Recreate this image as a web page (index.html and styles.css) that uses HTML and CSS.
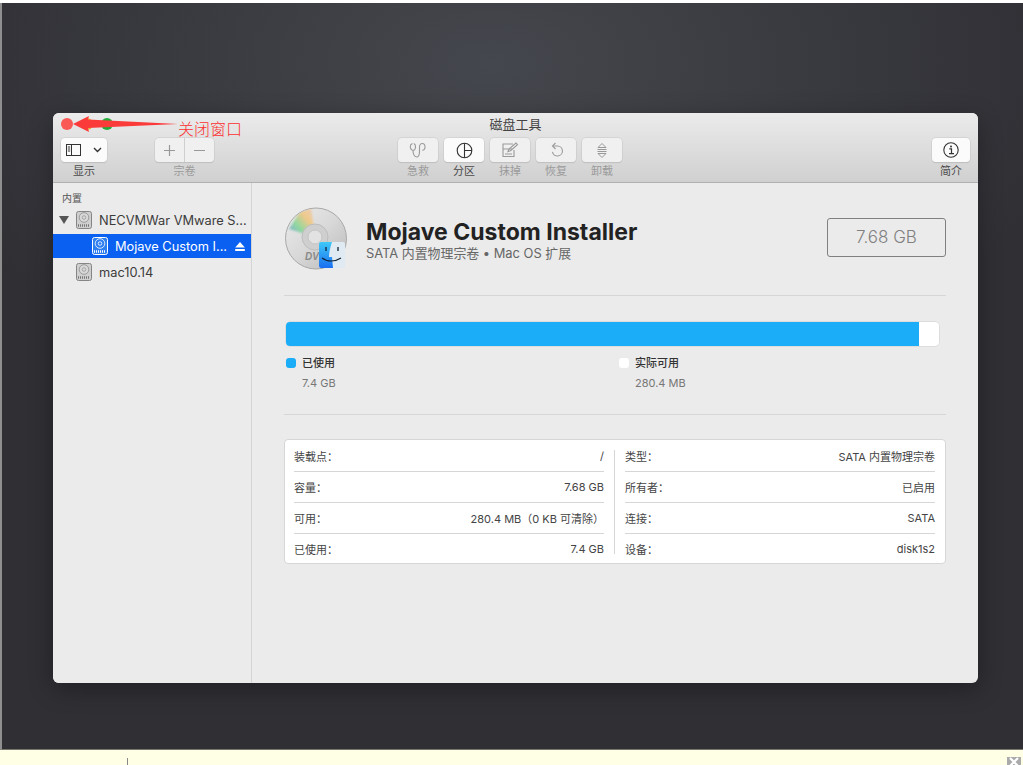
FILE: index.html
```html
<!DOCTYPE html>
<html lang="zh-CN">
<head>
    <meta charset="UTF-8">
    <meta name="viewport" content="width=device-width, initial-scale=1.0">
    <title>磁盘工具</title>
    <link rel="stylesheet" href="styles.css">
</head>
<body>
    <div class="desktop">
        <div class="window">
            <!-- 工具栏 -->
            <header class="titlebar">
                <div class="lights">
                    <span class="light red"></span>
                    <span class="light yellow"></span>
                    <span class="light green"></span>
                </div>
                <div class="window-title">磁盘工具</div>
                <div class="toolbar">
                    <div class="tool tool-view">
                        <div class="btn btn-view">
                            <svg width="15" height="12" viewBox="0 0 15 12"><rect x="0.5" y="0.5" width="14" height="11" fill="none" stroke="#333"/><path d="M5.5 0.5v11M1.8 3h2.4M1.8 5h2.4M1.8 7h2.4" fill="none" stroke="#333"/></svg>
                            <svg width="9" height="6" viewBox="0 0 9 6"><path d="M1 1l3.5 3.5L8 1" fill="none" stroke="#333" stroke-width="1.4"/></svg>
                        </div>
                        <span class="tool-label">显示</span>
                    </div>
                    <div class="tool tool-volume off">
                        <div class="btn btn-volume">
                            <span class="seg"><svg width="13" height="13" viewBox="0 0 13 13"><path d="M6.5 1v11M1 6.5h11" stroke="#999" stroke-width="1.2"/></svg></span>
                            <span class="seg seg-last"><svg width="13" height="13" viewBox="0 0 13 13"><path d="M1 6.5h11" stroke="#999" stroke-width="1.2"/></svg></span>
                        </div>
                        <span class="tool-label">宗卷</span>
                    </div>
                    <div class="tool-group">
                        <div class="tool off">
                            <div class="btn btn-action">
                                <svg width="18" height="17" viewBox="0 0 18 17"><path d="M3.5 1.5C2 2 1 4 1.5 6c.4 1.4 1.5 2.5 2.500 2.500S6.100 7.400 6.400 6C6.700 4 6 2 4.800 1.500M4 8.500c0 3 1.200 6.500 3.500 6.500 2.400 0 3-2.500 3-5.500V5c0-2 1.100-3.500 2.700-3.500 1.600 0 2.800 1.400 2.800 3.300 0 1.900-1.200 3.500-2.700 3.500" fill="none" stroke="#999" stroke-width="1.1"/></svg>
                            </div>
                            <span class="tool-label">急救</span>
                        </div>
                        <div class="tool">
                            <div class="btn btn-action">
                                <svg width="17" height="17" viewBox="0 0 17 17"><circle cx="8.5" cy="8.5" r="7.3" fill="none" stroke="#333" stroke-width="1.1"/><path d="M8.5 1.2v14.600M8.500 8.500h7.300" fill="none" stroke="#333" stroke-width="1.1"/></svg>
                            </div>
                            <span class="tool-label">分区</span>
                        </div>
                        <div class="tool off">
                            <div class="btn btn-action">
                                <svg width="18" height="16" viewBox="0 0 18 16"><path d="M12 2H2v5h9M2 7v7.500h11V8M4 12h7" fill="none" stroke="#999" stroke-width="1.1"/><path d="M7 9.500l1-2.500 7-6 1.500 1.700-7 6z" fill="none" stroke="#999" stroke-width="1.1"/></svg>
                            </div>
                            <span class="tool-label">抹掉</span>
                        </div>
                        <div class="tool off">
                            <div class="btn btn-action">
                                <svg width="14" height="16" viewBox="0 0 14 16"><path d="M4 4h4.500a5 5 0 1 1-5 5.800" fill="none" stroke="#999" stroke-width="1.1"/><path d="M6.500 1L3.500 4l3 3" fill="none" stroke="#999" stroke-width="1.1"/></svg>
                            </div>
                            <span class="tool-label">恢复</span>
                        </div>
                        <div class="tool off">
                            <div class="btn btn-action">
                                <svg width="12" height="17" viewBox="0 0 12 17"><path d="M2 5.500L6 1.500l4 4zM2 11.500l4 4 4-4zM1.500 7.500h9M1.500 9.500h9" fill="none" stroke="#999" stroke-width="1"/></svg>
                            </div>
                            <span class="tool-label">卸载</span>
                        </div>
                    </div>
                    <div class="tool tool-info">
                        <div class="btn btn-info">
                            <svg width="16" height="16" viewBox="0 0 16 16"><circle cx="8" cy="8" r="7.2" fill="none" stroke="#333" stroke-width="1.1"/><circle cx="8" cy="4.500" r="1" fill="#333"/><path d="M6.300 6.900H8.500V11.500M6 11.700h5" fill="none" stroke="#333" stroke-width="1.2"/></svg>
                        </div>
                        <span class="tool-label">简介</span>
                    </div>
                </div>
            </header>

            <div class="window-body">
                <!-- 边栏 -->
                <aside class="sidebar">
                    <div class="side-head">内置</div>
                    <div class="side-row">
                        <span class="triangle"></span>
                        <svg class="disk" width="16" height="18" viewBox="0 0 16 18"><rect x="0.5" y="0.5" width="15" height="17" rx="2" fill="#cfcfcf" stroke="#858585"/><circle cx="8" cy="6.500" r="4.800" fill="#d8d8d8" stroke="#8c8c8c" stroke-width="0.8"/><circle cx="8" cy="6.500" r="1.800" fill="none" stroke="#999" stroke-width="0.8"/><path d="M2 14.500h12" stroke="#777" stroke-width="2.500" stroke-dasharray="1 1"/></svg>
                        <span class="side-name">NECVMWar VMware S...</span>
                    </div>
                    <div class="side-row side-sub selected">
                        <svg class="disk" width="16" height="18" viewBox="0 0 16 18"><rect x="0.5" y="0.5" width="15" height="17" rx="2" fill="#2f7ff0" stroke="#fff"/><circle cx="8" cy="6.500" r="4.800" fill="none" stroke="#fff" stroke-width="0.8"/><circle cx="8" cy="6.500" r="1.800" fill="none" stroke="#fff" stroke-width="0.8"/><path d="M2 14.500h12" stroke="#fff" stroke-width="2.500" stroke-dasharray="1 1"/></svg>
                        <span class="side-name">Mojave Custom I...</span>
                        <svg class="eject" width="10" height="9" viewBox="0 0 10 9"><path d="M5 0l4.800 5.500H.2z" fill="#fff"/><rect x="0.2" y="7" width="9.6" height="2" fill="#fff"/></svg>
                    </div>
                    <div class="side-row">
                        <svg class="disk" width="16" height="18" viewBox="0 0 16 18"><rect x="0.5" y="0.5" width="15" height="17" rx="2" fill="#cfcfcf" stroke="#858585"/><circle cx="8" cy="6.500" r="4.800" fill="#d8d8d8" stroke="#8c8c8c" stroke-width="0.8"/><circle cx="8" cy="6.500" r="1.800" fill="none" stroke="#999" stroke-width="0.8"/><path d="M2 14.500h12" stroke="#777" stroke-width="2.500" stroke-dasharray="1 1"/></svg>
                        <span class="side-name">mac10.14</span>
                    </div>
                </aside>

                <!-- 主内容 -->
                <main class="content">
                    <section class="vol-head">
                        <svg class="vol-icon" width="64" height="64" viewBox="0 0 64 64">
                            <defs>
                                <linearGradient id="discBase" x1="0" y1="0" x2="1" y2="1">
                                    <stop offset="0" stop-color="#ececec"/>
                                    <stop offset="0.5" stop-color="#d8d8d8"/>
                                    <stop offset="1" stop-color="#b8b8b8"/>
                                </linearGradient>
                                <linearGradient id="discRainbow" x1="0" y1="1" x2="1" y2="0">
                                    <stop offset="0" stop-color="#7f9fe0"/>
                                    <stop offset="0.35" stop-color="#8fd8a0"/>
                                    <stop offset="0.65" stop-color="#f0c98a"/>
                                    <stop offset="1" stop-color="#e6cfc4"/>
                                </linearGradient>
                                <linearGradient id="finderBlue" x1="0" y1="0" x2="0" y2="1">
                                    <stop offset="0" stop-color="#3fc8f8"/>
                                    <stop offset="1" stop-color="#1a6ff0"/>
                                </linearGradient>
                                <filter id="soft"><feGaussianBlur stdDeviation="1.2"/></filter>
                                <clipPath id="discClip"><circle cx="32" cy="31.500" r="30"/></clipPath>
                            </defs>
                            <circle cx="32" cy="31.500" r="30.500" fill="url(#discBase)" stroke="#a8a8a8"/>
                            <g clip-path="url(#discClip)">
                                <path d="M31 30L5 22 15 6 27 0z" fill="url(#discRainbow)" filter="url(#soft)"/>
                            </g>
                            <circle cx="31" cy="30" r="13" fill="#cfcfcf" stroke="#bdbdbd"/>
                            <circle cx="31" cy="30" r="7" fill="#e2e2e2" stroke="#c4c4c4"/>
                            <text x="21" y="53" class="dvd-mark">DVD</text>
                            <rect x="35" y="35" width="26" height="26" rx="2" fill="#dfeaf3"/>
                            <path d="M37 35h11c-2 6-3 11-3 15h3l1 11H37a2 2 0 0 1-2-2V37a2 2 0 0 1 2-2z" fill="url(#finderBlue)"/>
                            <path d="M42 40v4M54 40v4" stroke="#123" stroke-width="1.3"/>
                            <path d="M38 51c5 4 13 4 19 0" fill="none" stroke="#123" stroke-width="1.1"/>
                        </svg>
                        <div class="vol-text">
                            <h1 class="vol-name">Mojave Custom Installer</h1>
                            <div class="vol-desc">SATA 内置物理宗卷 • Mac OS 扩展</div>
                        </div>
                        <div class="vol-size">7.68 GB</div>
                    </section>

                    <section class="usage">
                        <div class="bar"><div class="bar-used" style="width: 96.9%"></div></div>
                        <div class="legend">
                            <div class="legend-item">
                                <div class="legend-title"><span class="dot dot-used"></span>已使用</div>
                                <div class="legend-value">7.4 GB</div>
                            </div>
                            <div class="legend-item">
                                <div class="legend-title"><span class="dot dot-free"></span>实际可用</div>
                                <div class="legend-value">280.4 MB</div>
                            </div>
                        </div>
                    </section>

                    <section class="info">
                        <div class="info-col">
                            <div class="info-row"><span>装载点：</span><span>/</span></div>
                            <div class="info-row"><span>容量：</span><span>7.68 GB</span></div>
                            <div class="info-row"><span>可用：</span><span>280.4 MB（0 KB 可清除）</span></div>
                            <div class="info-row"><span>已使用：</span><span>7.4 GB</span></div>
                        </div>
                        <div class="info-col">
                            <div class="info-row"><span>类型：</span><span>SATA 内置物理宗卷</span></div>
                            <div class="info-row"><span>所有者：</span><span>已启用</span></div>
                            <div class="info-row"><span>连接：</span><span>SATA</span></div>
                            <div class="info-row"><span>设备：</span><span>disk1s2</span></div>
                        </div>
                    </section>
                </main>
            </div>

            <!-- 标注 -->
            <svg class="note-arrow" width="106" height="20" viewBox="0 0 106 20"><path d="M0 10L16 2l-1 3.500L105 10l-90 4 1 4z" fill="#fb3a3a"/></svg>
            <span class="note-text">关闭窗口</span>
        </div>
    </div>
    <div class="tipbar">
        <span class="tip-sep"></span>
        <span class="tip-close">
            <svg width="12" height="10" viewBox="0 0 12 10"><path d="M2 1l8 8M10 1l-8 8" stroke="#fff" stroke-width="2.2"/></svg>
        </span>
    </div>
</body>
</html>
```

FILE: styles.css
```css
:root {
    --ui-font: "Inter", "Noto Sans CJK SC", sans-serif;
    --line-color: #d6d6d6;
    --bar-blue: #1badf8;
}
* {
    box-sizing: border-box;
}
html, body {
    margin: 0;
    height: 765px;
    overflow: hidden;
}
body {
    font-family: var(--ui-font);
    background: #fff;
    display: flex;
    flex-direction: column;
}
.desktop {
    height: 747px;
    margin-top: 3px;
    padding: 110px 45px 0 51px;
    background: radial-gradient(ellipse 600px 350px at 490px 60px, #44474d 0%, #3a3b41 50%, #2f2f34 100%);
    border-left: 2px solid #8f8f8f;
    border-bottom: 1px solid #77776c;
}
.window {
    position: relative;
    width: 925px;
    height: 570px;
    background: #ebebeb;
    border-radius: 6px;
    box-shadow: 0 6px 24px rgba(0, 0, 0, 0.3);
    overflow: hidden;
}

/* titlebar */
.titlebar {
    position: relative;
    height: 70px;
    background: linear-gradient(#ebebeb, #d0d0d0);
    border-bottom: 1px solid #b0b0b0;
}
.lights {
    position: absolute;
    top: 5px;
    left: 8px;
    display: flex;
    gap: 8px;
}
.light {
    width: 12px;
    height: 12px;
    border-radius: 50%;
}
.red { background: #fa5a55; }
.yellow { background: #e5b33a; }
.green { background: #25ab3a; }
.window-title {
    text-align: center;
    font-size: 13px;
    line-height: 22px;
    color: #444;
}
.toolbar {
    display: flex;
    padding: 0 8px;
    margin-top: 3px;
}
.tool {
    display: flex;
    flex-direction: column;
    align-items: center;
}
.tool-label {
    font-size: 11px;
    line-height: 15px;
    margin-top: 2px;
    color: #4a4a4a;
}
.off .tool-label {
    color: #9a9a9a;
}
.btn {
    height: 24px;
    background: #fbfbfb;
    border-radius: 4px;
    box-shadow: 0 0 0 0.5px #c8c8c8, 0 1px 1px #b8b8b8;
    display: flex;
    align-items: center;
    justify-content: center;
}
.off .btn {
    background: #f0f0f0;
}
.btn-view {
    width: 46px;
    gap: 12px;
}
.tool-volume {
    margin-left: 48px;
}
.btn-volume {
    width: 59px;
}
.seg {
    flex: 1;
    height: 100%;
    display: flex;
    align-items: center;
    justify-content: center;
    border-right: 1px solid #cfcfcf;
}
.seg-last {
    border-right: none;
}
.tool-group {
    display: flex;
    gap: 6px;
    margin-left: 184px;
}
.btn-action {
    width: 40px;
}
.tool-info {
    margin-left: auto;
}
.btn-info {
    width: 38px;
}

/* sidebar */
.window-body {
    display: flex;
    height: 500px;
}
.sidebar {
    width: 199px;
    flex-shrink: 0;
    background: #ebebeb;
    border-right: 1px solid #d4d4d4;
    padding-top: 8px;
}
.side-head {
    font-size: 10px;
    line-height: 14px;
    color: #555;
    padding-left: 9px;
    margin-bottom: 2px;
}
.side-row {
    display: flex;
    align-items: center;
    height: 26px;
    padding-left: 23px;
    font-size: 12.8px;
    color: #3c3c3c;
    position: relative;
}
.side-sub {
    padding-left: 39px;
}
.triangle {
    position: absolute;
    left: 6px;
    top: 9px;
    border-left: 5px solid transparent;
    border-right: 5px solid transparent;
    border-top: 8px solid #555;
}
.disk {
    flex-shrink: 0;
    margin-right: 7px;
}
.selected {
    background: #0a60f0;
    color: #fff;
    height: 24px;
    margin: 1px 0;
}
.eject {
    position: absolute;
    right: 6px;
    top: 8px;
}

/* content */
.content {
    flex: 1;
    min-width: 0;
    padding: 25px 32px 0;
}
.vol-head {
    display: flex;
    align-items: center;
    height: 88px;
    padding-bottom: 25px;
    border-bottom: 1px solid var(--line-color);
}
.vol-icon {
    flex-shrink: 0;
    margin-right: 18px;
}
.dvd-mark {
    font-family: "Liberation Sans", sans-serif;
    font-size: 10px;
    font-weight: bold;
    font-style: italic;
    fill: #8a8a8a;
}
.vol-text {
    flex: 1;
}
.vol-name {
    margin: 0;
    font-size: 23px;
    line-height: 30px;
    font-weight: 700;
    color: #222;
}
.vol-desc {
    margin-top: -1px;
    font-size: 12.9px;
    line-height: 16px;
    color: #666;
}
.vol-size {
    width: 119px;
    height: 39px;
    margin-bottom: 3px;
    border: 1px solid #808080;
    border-radius: 3px;
    font-size: 17px;
    font-weight: 300;
    line-height: 37px;
    text-align: center;
    color: #808080;
}
.usage {
    padding-top: 26px;
    height: 119px;
    border-bottom: 1px solid var(--line-color);
}
.bar {
    height: 24px;
    margin: 0 7px 0 2px;
    background: #fff;
    border-radius: 4px;
    box-shadow: 0 0 0 0.5px #d0d0d0;
    overflow: hidden;
}
.bar-used {
    height: 100%;
    background: var(--bar-blue);
}
.legend {
    display: flex;
    padding-left: 2px;
    margin-top: 9px;
}
.legend-item {
    flex: 0 0 333px;
}
.legend-title {
    display: flex;
    align-items: center;
    font-size: 11px;
    font-weight: 500;
    line-height: 16px;
    color: #333;
}
.dot {
    width: 10px;
    height: 10px;
    border-radius: 3px;
    margin-right: 6px;
}
.dot-used { background: var(--bar-blue); }
.dot-free { background: #fff; }
.legend-value {
    padding-left: 16px;
    margin-top: 4px;
    font-size: 11px;
    line-height: 16px;
    color: #777;
}
.info {
    display: flex;
    margin-top: 24px;
    height: 125px;
    padding: 1px 10px 0 9px;
    background: #fff;
    border: 1px solid var(--line-color);
    border-radius: 4px;
    gap: 21px;
}
.info-col {
    flex: 1;
}
.info-col + .info-col {
    position: relative;
}
.info-col + .info-col::before {
    content: "";
    position: absolute;
    left: -11px;
    top: 9px;
    bottom: 9px;
    width: 1px;
    background: var(--line-color);
}
.info-row {
    display: flex;
    justify-content: space-between;
    align-items: center;
    height: 31px;
    padding-bottom: 1px;
    font-size: 11px;
    color: #444;
    border-bottom: 1px solid var(--line-color);
}
.info-row:last-child {
    border-bottom: none;
}

/* annotation */
.note-arrow {
    position: absolute;
    left: 20px;
    top: 1px;
}
.note-text {
    position: absolute;
    left: 125px;
    top: 6px;
    font-size: 16px;
    line-height: 20px;
    color: #fb3030;
    font-weight: 300;
}

/* bottom bar */
.tipbar {
    flex: 1;
    background: #ffffe6;
    position: relative;
}
.tip-sep {
    position: absolute;
    left: 127px;
    top: 8px;
    width: 1px;
    height: 8px;
    background: #888;
}
.tip-close {
    position: absolute;
    right: 2px;
    top: 7px;
    width: 14px;
    height: 9px;
    background: #aaa;
    display: flex;
    justify-content: center;
    overflow: hidden;
}
```
